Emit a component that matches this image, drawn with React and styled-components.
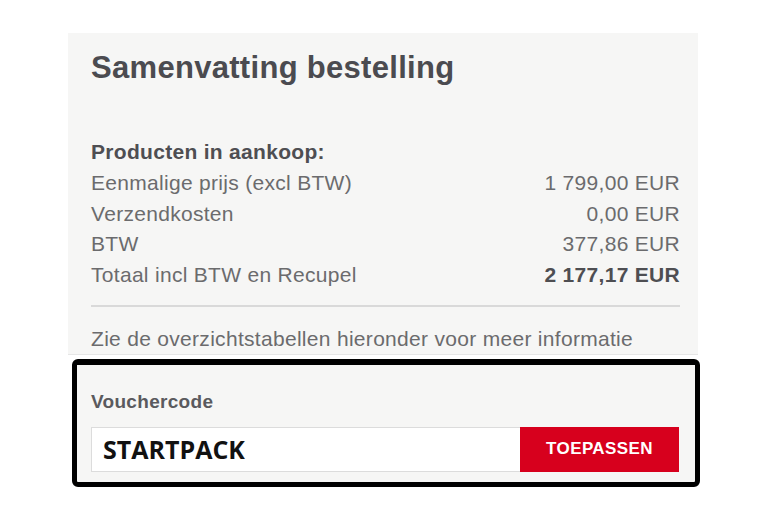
import styled, { createGlobalStyle } from 'styled-components'

const GlobalStyle = createGlobalStyle`
  html, body {
    margin: 0;
    padding: 0;
    background: #ffffff;
  }
  body {
    font-family: "Liberation Sans", Arial, Helvetica, sans-serif;
  }
`

const Page = styled.div`
  width: 768px;
  height: 512px;
  padding: 33px 0 0 68px;
  box-sizing: border-box;
`

const Panel = styled.div`
  width: 630px;
  display: flex;
  flex-direction: column;
`

const Summary = styled.section`
  background: #f6f6f5;
  padding: 17px 18px 0 23px;
  border-bottom: 1px solid #e6e6e6;
`

const Title = styled.h1`
  margin: 0;
  font-size: 31px;
  line-height: 36px;
  font-weight: 700;
  color: #4b4b50;
  letter-spacing: 0.3px;
`

const Rows = styled.div`
  margin-top: 51px;
  display: flex;
  flex-direction: column;
`

const Row = styled.div`
  display: flex;
  justify-content: space-between;
  align-items: baseline;
  font-size: 21px;
  line-height: 30.75px;
  letter-spacing: 0.3px;
  color: ${p => (p.$strong ? '#4e4e52' : '#6b6b6d')};
  font-weight: ${p => (p.$strong ? 700 : 400)};
`

const Amount = styled.span`
  font-weight: ${p => (p.$bold ? 700 : 400)};
  color: ${p => (p.$bold ? '#4e4e52' : '#6b6b6d')};
`

const Divider = styled.hr`
  margin: 14px 0 0;
  border: 0;
  height: 2px;
  background: #d9d9d9;
`

const Note = styled.p`
  margin: 17px 0 0;
  font-size: 21px;
  line-height: 30px;
  letter-spacing: 0.3px;
  color: #6b6b6d;
`

const VoucherBox = styled.section`
  margin: 4px -2px 0 4px;
  background: #f6f6f5;
  border: 5px solid #000;
  border-top-width: 6px;
  border-radius: 6px;
  padding: 25px 16px 10px 14px;
`

const VoucherLabel = styled.div`
  font-size: 19px;
  line-height: 24px;
  font-weight: 700;
  letter-spacing: 0.3px;
  color: #5a5a5e;
`

const VoucherForm = styled.div`
  margin-top: 13px;
  display: flex;
  height: 45px;
`

const CodeInput = styled.div`
  flex: 1;
  background: #fff;
  border: 1px solid #dcdcdc;
  border-right: 0;
  display: flex;
  align-items: center;
  padding-left: 11px;
  font-family: "Open Sans", "Liberation Sans", sans-serif;
  font-weight: 700;
  font-size: 25px;
  color: #111;
`

const ApplyButton = styled.button`
  width: 159px;
  border: 0;
  background: #d7001d;
  color: #fff;
  font-family: "Liberation Sans", Arial, sans-serif;
  font-weight: 700;
  font-size: 17px;
  letter-spacing: 0.4px;
  cursor: pointer;
`

const lines = [
  { label: 'Eenmalige prijs (excl BTW)', value: '1 799,00 EUR' },
  { label: 'Verzendkosten', value: '0,00 EUR' },
  { label: 'BTW', value: '377,86 EUR' },
  { label: 'Totaal incl BTW en Recupel', value: '2 177,17 EUR', bold: true },
]

export default function App() {
  return (
    <Page>
      <GlobalStyle />
      <Panel>
        <Summary>
          <Title>Samenvatting bestelling</Title>
          <Rows>
            <Row $strong>Producten in aankoop:</Row>
            {lines.map(l => (
              <Row key={l.label}>
                <span>{l.label}</span>
                <Amount $bold={l.bold}>{l.value}</Amount>
              </Row>
            ))}
          </Rows>
          <Divider />
          <Note>Zie de overzichtstabellen hieronder voor meer informatie</Note>
        </Summary>
        <VoucherBox>
          <VoucherLabel>Vouchercode</VoucherLabel>
          <VoucherForm>
            <CodeInput>STARTPACK</CodeInput>
            <ApplyButton>TOEPASSEN</ApplyButton>
          </VoucherForm>
        </VoucherBox>
      </Panel>
    </Page>
  )
}
